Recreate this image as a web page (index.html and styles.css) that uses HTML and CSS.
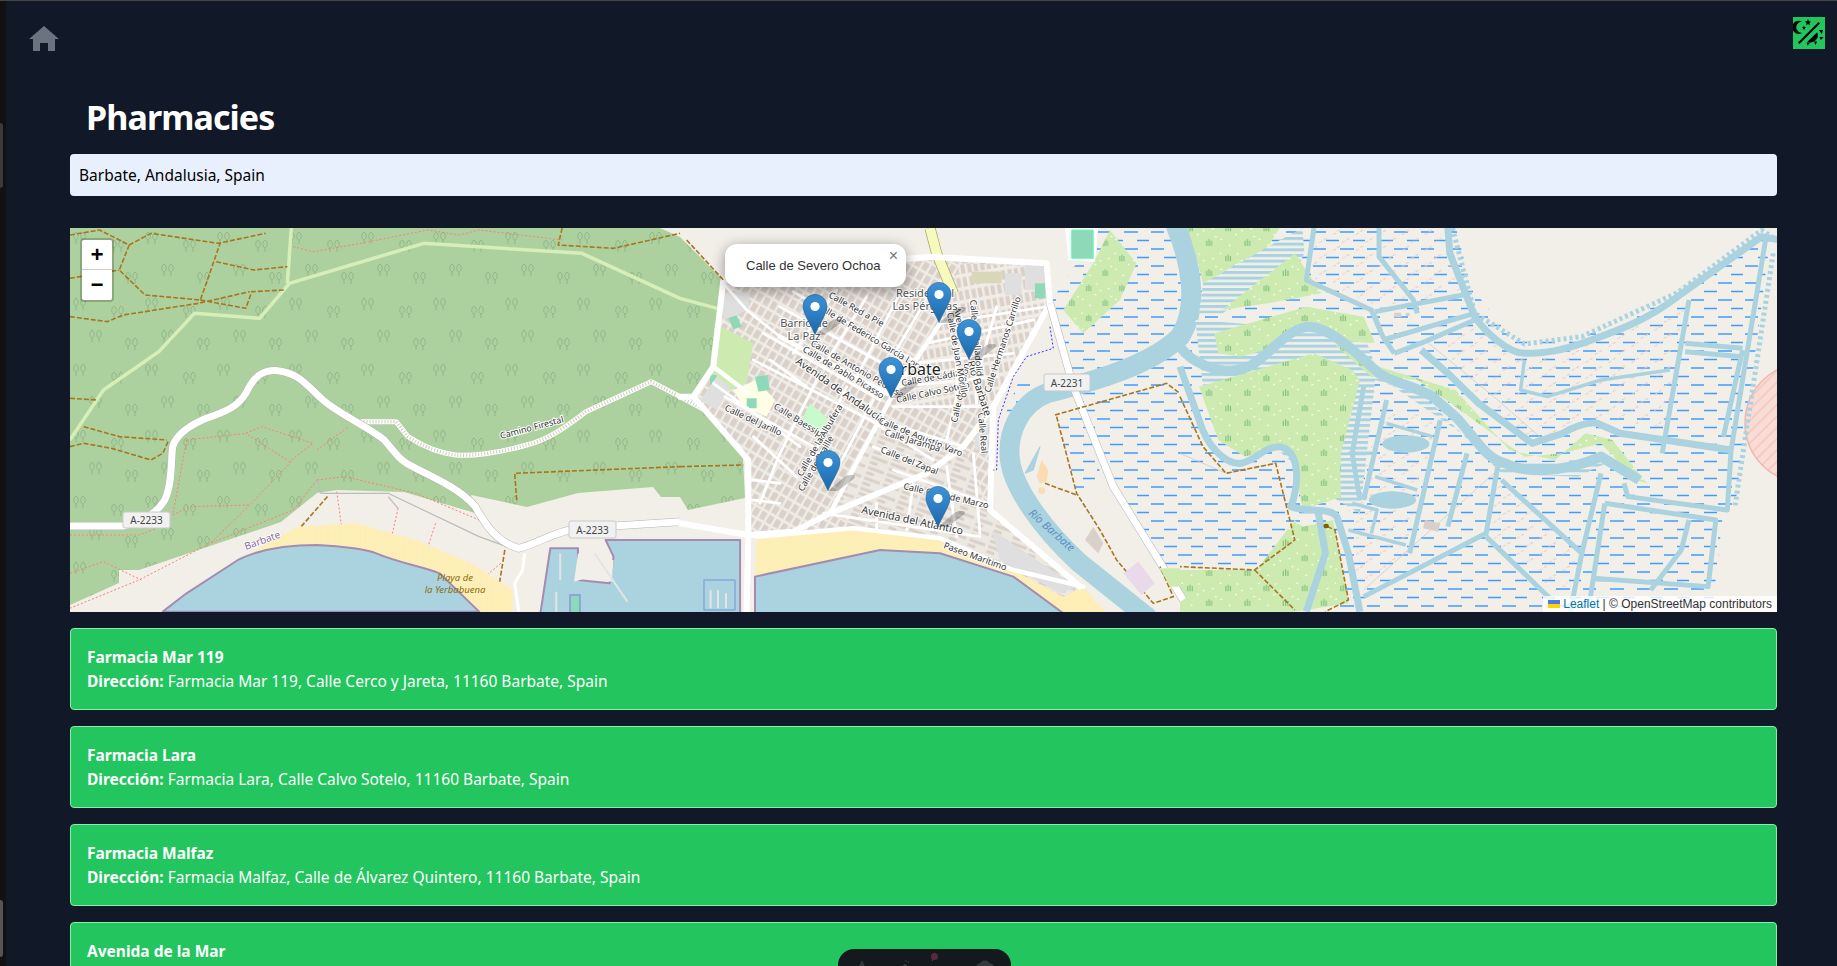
FILE: index.html

```html
<!DOCTYPE html>
<html lang="en">
<head>
  <meta charset="UTF-8" />
  <meta name="viewport" content="width=device-width, initial-scale=1.0" />
  <title>Pharmacies</title>
  <link rel="stylesheet" href="styles.css">
</head>
<body>
  <div class="strip"><span class="nub nub-top"></span><span class="nub nub-bottom"></span></div>

  <div class="page">
    <header class="topbar">
      <a class="home" href="#" aria-label="Home">
        <svg width="30" height="25" viewBox="0 0 30 25"><path d="M15 0 30 13H26V25H19V17H11V25H4V13H0Z"/></svg>
      </a>
      <button class="theme-btn" aria-label="Toggle theme">
        <svg width="32" height="32" viewBox="0 0 32 32">
          <path d="M9 4.5A6.6 6.6 0 1 0 9 16 5.6 5.6 0 0 1 9 4.5Z"/>
          <path d="M15 2 15.9 4.2 18 4.6 16.4 6 16.9 8.2 15 7 13.1 8.2 13.6 6 12 4.6 14.1 4.2Z"/>
          <path d="M11 8.6 11.6 10 13 10.4 11.9 11.3 12.2 12.7 11 12 9.8 12.7 10.1 11.3 9 10.4 10.4 10Z"/>
          <path d="M5 25.4 25.5 5 27 6.5 6.5 27Z"/>
          <path d="M24.2 15.2A7.4 7.4 0 0 1 14.4 24.8Z"/>
          <path d="M26 13H30L28.8 17ZM26.6 20H30.6L27.8 23ZM21 24.6H24L22.6 28ZM13.6 25.4H17.4L14.6 28.6Z"/>
        </svg>
      </button>
    </header>

    <main class="content">
      <h1 class="title">Pharmacies</h1>
      <input class="search" type="text" value="Barbate, Andalusia, Spain">

      <section class="map">
        <svg class="map-svg" width="1707" height="384" viewBox="0 0 1707 384">
          <defs>
            <pattern id="trees" width="72" height="66" patternUnits="userSpaceOnUse">
              <rect width="72" height="66" fill="#add19e"/>
              <g class="tree">
                <path d="M6 4C3 6 3 11 6 12 9 11 9 6 6 4ZM6 12V16M13 4C10 6 10 11 13 12 16 11 16 6 13 4ZM13 12V16"/>
                <path d="M44 12C41 14 41 19 44 20 47 19 47 14 44 12ZM44 20V24M51 12C48 14 48 19 51 20 54 19 54 14 51 12ZM51 20V24"/>
                <path d="M22 36C19 38 19 43 22 44 25 43 25 38 22 36ZM22 44V48M29 36C26 38 26 43 29 44 32 43 32 38 29 36ZM29 44V48"/>
                <path d="M58 44C55 46 55 51 58 52 61 51 61 46 58 44ZM58 52V56M65 44C62 46 62 51 65 52 68 51 68 46 65 44ZM65 52V56"/>
              </g>
            </pattern>
            <pattern id="wet" width="54" height="17" patternUnits="userSpaceOnUse">
              <path class="wet-line" d="M1 4H14M28 4H42M14 12.5H27M41 12.5H53"/>
            </pattern>
            <pattern id="salt" width="60" height="48" patternUnits="userSpaceOnUse">
              <path class="salt-line" d="M4 20 24 6M40 44 58 30"/>
            </pattern>
            <pattern id="marsh" width="100" height="90" patternUnits="userSpaceOnUse">
              <rect width="100" height="90" fill="#cdebb0"/>
              <path class="grass" d="M20 34V18M26 34V14M32 34V18M70 78V62M76 78V58M82 78V62"/>
              <g fill="#fff">
                <circle cx="6" cy="10" r="2.4"/><circle cx="50" cy="12" r="2.4"/><circle cx="86" cy="26" r="2.4"/>
                <circle cx="46" cy="44" r="2.4"/><circle cx="8" cy="58" r="2.4"/><circle cx="30" cy="76" r="2.4"/>
                <circle cx="62" cy="32" r="2.4"/><circle cx="94" cy="50" r="2.4"/>
              </g>
            </pattern>
            <pattern id="tidal" width="24" height="17" patternUnits="userSpaceOnUse">
              <rect width="24" height="17" fill="#f2efe9"/><rect width="24" height="9" fill="#aad3df"/>
            </pattern>
            <pattern id="blocks" width="48" height="33" patternUnits="userSpaceOnUse" patternTransform="rotate(30)">
              <rect width="48" height="33" fill="#f0ece6"/>
              <rect x="3" y="4" width="17" height="25" fill="#d9d0c9"/>
              <rect x="27" y="4" width="17" height="25" fill="#d9d0c9"/>
            </pattern>
            <pattern id="blocks-east" width="39" height="39" patternUnits="userSpaceOnUse" patternTransform="rotate(-10)">
              <rect width="39" height="39" fill="#f0ece6"/>
              <rect x="5" y="5" width="12" height="28" fill="#d9d0c9"/>
              <rect x="24" y="5" width="12" height="28" fill="#d9d0c9"/>
            </pattern>
            <pattern id="blocks-south" width="60" height="33" patternUnits="userSpaceOnUse" patternTransform="rotate(20)">
              <rect width="60" height="33" fill="#ece8e2"/>
              <rect x="4" y="5" width="50" height="9" fill="#d9d0c9"/>
              <rect x="4" y="21" width="24" height="9" fill="#d9d0c9"/>
            </pattern>
            <pattern id="hatch" width="8" height="8" patternUnits="userSpaceOnUse" patternTransform="rotate(-45)">
              <rect width="8" height="8" fill="#f8ddd6"/><path d="M0 4H8" stroke="#f4b8b0"/>
            </pattern>
            <pattern id="sand" width="6" height="6" patternUnits="userSpaceOnUse">
              <rect width="6" height="6" fill="#fff1ba"/><circle cx="1.5" cy="1.5" r=".5" fill="#d8bd74"/><circle cx="4.5" cy="4.5" r=".5" fill="#d8bd74"/>
            </pattern>
            <linearGradient id="pinfill" x1="0" y1="0" x2="0" y2="1">
              <stop offset="0" stop-color="#3d93d8"/><stop offset="1" stop-color="#1c68ab"/>
            </linearGradient>
            <g id="pin">
              <path class="pin-shadow" d="M12.5 41 30 26C37 24 42 25 38 29L22 41Z"/>
              <path class="pin-body" d="M12.5.5C5.9.5.5 5.9.5 12.5.5 19 8 30 12.5 40.5 17 30 24.5 19 24.5 12.5 24.5 5.9 19.1.5 12.5.5Z"/>
              <circle cx="12.5" cy="12.5" r="4.6" fill="#fff"/>
            </g>
          </defs>

          <rect width="1707" height="384" fill="#f2efe9"/>

          <!-- marshland -->
          <path fill="url(#wet)" d="M1003 159 1043 149 1110 109 1125 65 1107 0H1386L1401 59 1443 112 1512 109 1607 69 1692 5 1700 12 1665 279 1653 285 1642 384H1125L1055 276Z"/>
          <path fill="url(#wet)" d="M1030 0H1107L1125 65 1110 109 1043 149 1003 159 980 75ZM987 189 1013 182 1033 255 1007 265ZM934 190 960 165 990 150 950 150Z"/>
          <ellipse cx="1735" cy="195" rx="60" ry="60" fill="url(#hatch)" stroke="#f4b4b0" stroke-width="1.5"/>

          <path fill="url(#trees)" d="M0 0H590L610 9 653 52 643 139 625 172 673 230 675 270 618 282 610 269H591L583 259 508 265 457 279 401 267 405 285 334 264 267 262 247 265 211 294 69 342H49V355L0 377Z"/>

          <g class="z" transform="translate(610,-8) scale(.3333)">
            <path fill="#cdebb0" d="M105 310 220 370 190 540 130 560 40 530 100 440Z"/>
            <path fill="url(#marsh)" d="M1290 30 1370 130 1320 240 1210 340 1150 270 1240 130Z"/>
            <path class="river" d="M1490 24C1530 120 1560 260 1500 350 1430 420 1300 470 1100 520 1020 550 980 640 990 720 1000 800 1080 920 1200 1030L1400 1190"/>
          </g>

          <g class="z" transform="translate(1110,-8) scale(.3827,.3333)">
            <path fill="url(#salt)" d="M360 24H690L750 220 520 260 340 170ZM690 380 770 320 900 410 1050 370 1320 240 1270 620 1080 600 920 660 780 540ZM540 560 680 600 600 1000 450 1100 440 860ZM830 780 1040 1000 1000 1130 800 950Z"/>
            <path fill="url(#tidal)" d="M60 190 230 80 320 24 325 100 300 160 110 280 50 280Z"/>
            <path fill="url(#tidal)" d="M40 300 480 340 520 470 850 730 1130 720 1040 770 840 760 640 530 510 480 470 880 410 840 60 500Z"/>
            <path fill="url(#marsh)" d="M20 24H260L230 80 60 190 40 100ZM110 270 300 100 370 220 230 250ZM90 340 330 260 480 290 510 370 400 360 360 310 250 380 160 410 100 400ZM50 500 350 400 450 450 470 480 420 700 420 830 320 870 300 730 260 680 170 710 100 660ZM400 370 520 440 720 510 860 690 980 720 1060 640 1130 660 1220 790 1190 780 1100 670 1000 700 900 710 720 560 620 480 500 470ZM0 1050H200L300 900 320 920 400 900 440 1150 300 1175H0Z"/>
            <ellipse cx="590" cy="672" rx="62" ry="26" fill="#aad3df"/>
            <ellipse cx="555" cy="840" rx="62" ry="26" fill="#aad3df"/>
            <path class="ch c8" d="M0 380C30 430 100 460 150 450 220 440 270 320 340 320 400 325 470 410 520 460 560 490 620 500 660 530L720 590C770 650 800 720 850 730 900 760 1000 760 1100 710L1200 780"/>
            <path class="ch c6" d="M700 24 705 100 770 290C800 340 860 400 900 400 960 400 1000 390 1050 370 1150 330 1220 300 1300 230L1520 50 1568 60"/>
            <path class="ch c6" d="M630 390 700 460 780 550 920 670 1000 640C1030 620 1060 605 1090 610L1150 640 1440 690"/>
            <path class="ch c6" d="M0 440 50 600C70 680 120 735 160 730 200 720 220 680 260 680 310 690 315 780 290 860 340 880 390 860 410 890L440 1000 470 1175"/>
            <path class="ch c6" d="M360 870 380 1000 330 1175"/>
            <path class="ch c4" d="M350 24 330 180 500 270 530 350 560 400M520 24V110L610 240 620 280M510 275 740 225M530 360 770 280M560 400 640 365 770 300"/>
            <path class="ch c4" d="M480 500 450 700 470 840M540 540 480 840M680 600 600 1000M750 700 700 920M830 740 800 940 480 1130M800 950 980 1150"/>
            <path class="ch c4" d="M840 780 1050 1000 1100 760M1050 1000 1020 1175M1110 850 1070 1150M1110 850 1400 900 1380 1100 1080 1075M1330 900 1310 990 1230 1110"/>
            <path class="ch c4" d="M1160 790 1170 830 1430 870 1440 690 1530 60M1470 390 1420 650M1330 240 1260 700M1320 370 1470 385M1320 395 1470 410"/>
            <path class="ch c3" d="M900 420 890 510 960 530 1100 480 1280 450M440 700H500M510 770 620 810M540 610 660 650M440 930 590 975M450 850 515 870 500 940"/>
            <path class="ch-edge" d="M712 24 770 280 900 372 1050 350 1300 218 1520 30 1558 60M1550 100 1450 860"/>
            <path class="ch-thin" d="M340 180 510 270 540 370M0 700 120 760 250 730M650 370 830 540 950 660M840 740 480 1110"/>
            <path class="track" d="M0 530 60 680 120 760 250 730 300 960 195 1050 0 1040M195 1050 300 1170M385 920 405 930 440 1140 380 1175"/>
            <circle cx="382" cy="918" r="7" fill="#8a5a00"/>
            <path fill="#d9d0c9" d="M640 900 680 910 675 935 635 925Z"/>
            <path fill="#d9d0c9" d="M560 278H578V292H560ZM590 278H600V288H590Z"/>
          </g>

          <!-- left half, forest tracks and the A-2233 -->
          <g class="z" transform="translate(-10,-8) scale(.3954,.3333)">
            <path class="green" d="M25 660 110 510 250 395 340 280 505 295 580 190 920 70 1320 100 1568 235 1740 290M585 24 575 190"/>
            <path class="track" d="M25 45 100 30 175 75 230 40 400 70 520 40M175 75 150 150 215 225 355 240 405 70M395 125 490 150 575 140M355 240 470 265 485 215 570 210M25 290 120 305 160 285 350 250 480 215M25 175 150 150M25 535 95 540M60 620 150 650 270 660M25 680 60 670 130 685 230 720 260 700 275 660M1155 840 1150 760 1568 740M1270 24 1260 75 1400 85 1568 40M610 920 680 825M1125 990 1110 1100 1095 1110"/>
            <path class="dots" d="M590 80 640 95 760 70 930 30 1010 45 1060 30 1270 60M320 660 470 640 510 620 640 670 580 725 470 640M650 690 730 620M585 725 480 855 380 970 200 1080 25 1165M320 660 285 885 330 860 480 855M25 945H200L245 925M25 1060 110 1025 205 1080M650 780 720 770 900 820 1060 900M650 780 590 870 380 970M700 815 715 945M855 865 835 970M950 910 925 1000M1115 1030 1050 1095"/>
            <path class="thin" d="M650 780 660 820 830 820 1060 950 1130 980M830 830 855 865"/>
            <path class="unpaved-case" d="M760 605H850L880 650C920 680 960 700 1000 705 1050 710 1120 695 1180 675 1230 660 1270 630 1330 575L1495 485 1568 530 1740 640"/>
            <path class="unpaved" d="M760 605H850L880 650C920 680 960 700 1000 705 1050 710 1120 695 1180 675 1230 660 1270 630 1330 575L1495 485 1568 530 1740 640"/>

            <path fill="url(#sand)" d="M450 1020 600 920 750 910 900 960 1040 1030 1145 1110V1175H1060L960 1060 800 1000 650 975 540 985Z"/>
            <path class="bay" d="M260 1175 320 1120 450 1020C500 990 560 975 650 975 720 978 780 990 800 1000 860 1030 920 1040 960 1060L1060 1175Z"/>
            <path class="bay" d="M1240 985H1310V1080L1390 1090 1400 1010 1380 960H1720V1180H1215Z"/>
            <path fill="#f2efe9" d="M1310 1000 1400 1020 1395 1085 1330 1075 1300 1085Z"/>
            <path fill="#8ed9b8" stroke="#89a8d8" stroke-width="2" d="M1290 1125H1315V1180H1290Z"/>
            <path class="pier" d="M1265 1000V1080M1255 1115V1175M1352 1000 1435 1145"/>

            <path class="road-case" d="M25 918H160C210 905 245 880 265 840 285 790 280 720 285 680 295 640 330 615 370 595 420 575 450 560 470 520 490 470 510 450 550 452 600 458 620 490 660 535 700 580 780 620 820 660 850 700 860 725 900 745 960 780 1020 815 1050 860 1075 910 1100 965 1160 985 1210 970 1250 935 1310 925L1568 905"/>
            <path class="road" d="M25 918H160C210 905 245 880 265 840 285 790 280 720 285 680 295 640 330 615 370 595 420 575 450 560 470 520 490 470 510 450 550 452 600 458 620 490 660 535 700 580 780 620 820 660 850 700 860 725 900 745 960 780 1020 815 1050 860 1075 910 1100 965 1160 985 1210 970 1250 935 1310 925L1568 905"/>
            <path class="road-thin" d="M1175 1000 1170 1050 1150 1090 1160 1175"/>
          </g>

          <!-- town -->
          <g class="z" transform="translate(610,-8) scale(.3333)">
            <path fill="url(#sand)" d="M230 950 520 925 780 955 1000 1050 1210 1100 1280 1180H1150L1000 1070 780 1000 600 990 225 1070Z"/>
            <path class="bay" d="M225 1070 600 990 780 1000 1000 1070 1150 1180H225Z"/>
            <path fill="none" stroke="#89a8d8" stroke-width="1.5" d="M72 1080H165V1170H72Z"/>
            <path class="pier" d="M92 1110V1165M114 1110V1165M138 1120V1165"/>

            <path fill="url(#blocks)" d="M130 190 750 120 1100 140 1105 250 945 560 930 870 1210 1100 1150 1130 1000 1050 780 950 520 925 230 950 210 940 205 720 40 530 100 440Z"/>
            <path fill="url(#blocks-east)" d="M780 310 840 130 1100 140 1105 250 945 560 640 560Z"/>
            <path fill="url(#blocks-south)" d="M600 600 850 680 930 870 1210 1100 1150 1130 1000 1050 780 950 520 925 450 880Z"/>
            <path fill="#cdebb0" d="M105 310 220 370 200 490 130 520 90 440Z"/>
            <path fill="#ffffe5" d="M160 510 230 480 285 540 260 590 190 560Z"/>
            <path fill="#8ed9b8" d="M225 470 262 465 270 510 235 515ZM200 535H230V565H200ZM90 465H110V495H90ZM145 295 170 285 185 320 160 328Z"/>
            <path fill="#c8facc" d="M390 550 450 600 420 650 360 610Z"/>
            <path fill="#e0dfdf" d="M975 160H1025V225H975ZM1035 130H1100V210H1035ZM130 220 210 215 205 270 130 300ZM60 540 110 470 150 500 110 570ZM885 590H925V690H885ZM935 930 1190 1100 1140 1120 960 1020Z"/>
            <path fill="#d8d8b8" d="M875 155H965V190H875Z"/>
            <path fill="#fff" d="M1155 24H1255L1245 125 1165 120Z"/>
            <path fill="#8ed9b8" stroke="#6fb" stroke-width="1" d="M1175 30H1240V115H1175Z"/>
            <path fill="#8ed9b8" d="M1065 190H1095V235H1065Z"/>
            <path class="hw" d="M750 24 770 100 820 220"/>
            <path class="hw-in" d="M750 24 770 100 820 220"/>

            <path class="st3" d="M470 210 340 400M560 230 430 440M660 220 530 470M750 220 620 440M420 460 300 700 240 850M500 500 380 750M580 540 460 770M340 215 700 420M300 260 660 460M250 340 600 540M220 420 570 600 760 720M135 530 400 680M100 490 360 680M220 650 350 770M215 780 300 790M215 840 300 850"/>
            <path class="st3" d="M780 310 1100 260M740 370 1060 300M700 430 1000 400M660 500 950 470M640 560 920 560M830 260V530L800 660M880 260 890 550M950 260 900 440M1010 260 950 440M600 600 850 680M580 680 760 750M640 750 920 850M590 850V930M430 880 900 950M700 790 680 930M800 740 830 950M880 700 900 940M270 420 380 500M130 190 200 270 300 350"/>
            <path class="st5" d="M780 310 635 530 450 880M300 350 640 530M230 950 520 925 780 955 1000 1050 1210 1100M100 440 205 520"/>
            <path class="st7" d="M205 945V720L40 530 100 440 130 180 300 150 750 110 1100 130 1110 250 940 560 930 870 1200 1100M0 910 205 945 340 935 450 880 740 760 850 680 940 560M0 530 40 530M205 945 200 1175"/>
            <path class="road-case" d="M1110 250 1180 500 1300 800 1510 1140"/>
            <path class="road" d="M1110 250 1180 500 1300 800 1510 1140"/>
            <path class="boundary" d="M1110 320 1120 385 1040 410 1000 470 955 600 950 750H940"/>
            <path class="track" d="M20 60 130 180M0 740 190 735M1125 585 1460 490 1500 520M1130 590 1190 820 1260 930 1310 1020 1420 1150 1480 1130 1440 1040M1095 790 1190 825"/>
            <path fill="#fbdcb0" d="M1070 770 1085 720 1105 750 1100 785 1080 790Z"/>
            <circle cx="1085" cy="812" r="10" fill="#fbdcb0"/>
            <path class="thin-blue" d="M1035 760 1080 680 1060 750Z"/>
            <path fill="#ead9ea" d="M1330 1060 1375 1025 1425 1090 1385 1125Z"/>
            <path fill="#d9d0c9" d="M1215 960 1240 920 1270 970 1255 1000Z"/>
            <path fill="#cdebb0" d="M1440 1045H1500V1100H1470Z"/>
          </g>

          <text class="lbl" transform="translate(758 69) rotate(29)">Calle Red a Pie</text>
          <text class="lbl" transform="translate(746 80) rotate(31)">Calle de Federico García Lorca</text>
          <text class="lbl" transform="translate(740 117) rotate(30)">Calle de Antonio Pedrosa</text>
          <text class="lbl" transform="translate(732 123) rotate(31)">Calle de Pablo Picasso</text>
          <text class="lbl lbl-big" transform="translate(725 135) rotate(35)">Avenida de Andalucía</text>
          <text class="lbl" transform="translate(654 182) rotate(25)">Calle del Jarillo</text>
          <text class="lbl" transform="translate(703 180) rotate(32)">Calle Baessipo</text>
          <text class="lbl" transform="translate(732 249) rotate(-60)">Calle de la Albufera</text>
          <text class="lbl" transform="translate(733 264) rotate(-60)">Calle de Braille</text>
          <text class="lbl" transform="translate(832 158) rotate(-10)">Calle de Cádiz</text>
          <text class="lbl" transform="translate(827 175) rotate(-12)">Calle Calvo Sotelo</text>
          <text class="lbl" transform="translate(808 195) rotate(22)">Calle de Agustín Varo</text>
          <text class="lbl" transform="translate(814 207) rotate(17)">Calle Jarampa</text>
          <text class="lbl" transform="translate(810 224) rotate(22)">Calle del Zapal</text>
          <text class="lbl" transform="translate(833 261) rotate(13)">Calle Ocho de Marzo</text>
          <text class="lbl lbl-big" transform="translate(791 285) rotate(12)">Avenida del Atlántico</text>
          <text class="lbl" transform="translate(873 320) rotate(20)">Paseo Marítimo</text>
          <text class="lbl" transform="translate(908 185) rotate(85)">Calle Real</text>
          <text class="lbl" transform="translate(920 165) rotate(-72)">Calle Hermanos Carrillo</text>
          <text class="lbl lbl-big" transform="translate(897 134) rotate(72)">Río Barbate</text>
          <text class="lbl" transform="translate(887 195) rotate(-78)">Calle de Colón</text>
          <text class="lbl" transform="translate(877 85) rotate(80)">Calle de Juan Morillo</text>
          <text class="lbl" transform="translate(884 80) rotate(80)">Avenida</text>
          <text class="lbl" transform="translate(900 72) rotate(85)">Calle de Valladolid</text>
          <text class="lbl" transform="translate(431 211) rotate(-15)">Camino Firestal</text>

          <text class="place" x="841" y="147">Barbate</text>
          <text class="suburb" x="734" y="99">Barrio de</text>
          <text class="suburb" x="734" y="112">La Paz</text>
          <text class="suburb" x="855" y="69">Residencial</text>
          <text class="suburb" x="855" y="82">Las Pérgolas</text>
          <text class="water-lbl" transform="translate(958 286) rotate(42)">Río Barbate</text>
          <text class="park-lbl" transform="translate(176 322) rotate(-20)">Barbate</text>
          <text class="beach-lbl" x="385" y="353">Playa de</text>
          <text class="beach-lbl" x="385" y="365">la Yerbabuena</text>

          <g class="shield"><rect x="53" y="284" width="47" height="16" rx="2"/><text x="76.5" y="296">A-2233</text></g>
          <g class="shield"><rect x="499" y="293" width="47" height="17" rx="2"/><text x="522.5" y="305.5">A-2233</text></g>
          <g class="shield"><rect x="974" y="146" width="46" height="17" rx="2"/><text x="997" y="158.5">A-2231</text></g>

          <use href="#pin" x="732.5" y="66"/>
          <use href="#pin" x="856.5" y="54"/>
          <use href="#pin" x="886.5" y="91"/>
          <use href="#pin" x="808.5" y="129"/>
          <use href="#pin" x="745.5" y="222"/>
          <use href="#pin" x="855.5" y="258"/>
        </svg>

        <div class="zoom-ctl">
          <a class="zoom-btn zoom-in" href="#">+</a>
          <a class="zoom-btn" href="#">−</a>
        </div>

        <div class="popup">
          <a class="popup-close" href="#">×</a>
          <div class="popup-text">Calle de Severo Ochoa</div>
          <span class="popup-tip"></span>
        </div>

        <div class="attrib">
          <svg width="12" height="8" viewBox="0 0 12 8"><rect width="12" height="4" fill="#4C7BE1"/><rect y="4" width="12" height="4" fill="#FFD500"/></svg>
          <a href="#">Leaflet</a> | © OpenStreetMap contributors
        </div>
      </section>

      <div class="cards">
        <article class="card">
          <div class="card-name">Farmacia Mar 119</div>
          <div><b>Dirección:</b> Farmacia Mar 119, Calle Cerco y Jareta, 11160 Barbate, Spain</div>
        </article>
        <article class="card">
          <div class="card-name">Farmacia Lara</div>
          <div><b>Dirección:</b> Farmacia Lara, Calle Calvo Sotelo, 11160 Barbate, Spain</div>
        </article>
        <article class="card">
          <div class="card-name">Farmacia Malfaz</div>
          <div><b>Dirección:</b> Farmacia Malfaz, Calle de Álvarez Quintero, 11160 Barbate, Spain</div>
        </article>
        <article class="card">
          <div class="card-name">Avenida de la Mar</div>
        </article>
      </div>
    </main>
  </div>

  <div class="dock">
    <svg width="20" height="18" viewBox="0 0 20 18"><path d="M10 2 15 14H5Z"/></svg>
    <svg width="20" height="18" viewBox="0 0 20 18"><path d="M3 14 13 5 16 8 8 16ZM14 1V3M17 2 16 4"/></svg>
    <span class="dock-meter"><span class="dock-dot"></span></span>
    <span class="dock-sep"></span>
    <svg width="24" height="18" viewBox="0 0 24 18"><path d="M8 4 10 2H14L16 4 20 6V16H4V6Z"/></svg>
  </div>
</body>
</html>
```

FILE: styles.css

```css
* {
  box-sizing: border-box;
}
html, body {
  height: 966px;
  margin: 0;
  overflow: hidden;
}
body {
  display: flex;
  background: #111827;
  border-top: 1px solid #444;
  font-family: "Noto Sans", sans-serif;
  font-size: 15.5px;
  color: #fff;
}

/* window edge on the left */
.strip {
  width: 6px;
  flex: none;
  background: #111;
  display: flex;
  flex-direction: column;
  padding-top: 122px;
}
.nub {
  width: 3px;
  background: #3a3a3a;
  border-radius: 0 3px 3px 0;
}
.nub-top {
  height: 65px;
}
.nub-bottom {
  height: 57px;
  margin-top: 712px;
  background: #555;
}

.page {
  flex: 1;
  min-width: 0;
}
.topbar {
  height: 60px;
  display: flex;
  justify-content: space-between;
  align-items: flex-start;
  padding: 16px 12px 0 23px;
}
.home {
  margin-top: 9px;
  display: block;
}
.home svg {
  display: block;
  fill: #6b7280;
}
.theme-btn {
  width: 32px;
  height: 32px;
  padding: 0;
  border: 0;
  background: #22c55e;
  display: block;
}
.theme-btn svg {
  display: block;
  fill: #000;
}

.content {
  padding: 0 60px 0 64px;
}
.title {
  height: 93px;
  margin: 0;
  padding: 36px 0 0 16px;
  font-size: 34px;
  line-height: 40px;
  font-weight: 700;
  letter-spacing: -.9px;
}
.search {
  display: block;
  width: 100%;
  height: 42px;
  padding: 0 9px;
  border: 0;
  border-radius: 4px;
  background: #e8f0fe;
  color: #000;
  font: inherit;
}

.map {
  position: relative;
  height: 384px;
  margin-top: 32px;
  overflow: hidden;
  background: #f2efe9;
}
.map-svg {
  display: block;
}
.z path {
  vector-effect: non-scaling-stroke;
  stroke-linejoin: round;
}
.tree {
  fill: none;
  stroke: #8fb58a;
  stroke-width: 1;
}
.wet-line {
  stroke: #3d9cff;
  stroke-width: 1.3;
}
.salt-line {
  stroke: #eccbc4;
  stroke-width: 3;
  stroke-dasharray: 9 5;
}
.grass {
  stroke: #7fbf7f;
  stroke-width: 3;
}
.river {
  fill: none;
  stroke: #aad3df;
  stroke-width: 20;
  stroke-linecap: round;
}
.ch {
  fill: none;
  stroke: #aad3df;
}
.c8 { stroke-width: 10; }
.c6 { stroke-width: 7; }
.c4 { stroke-width: 5; }
.c3 { stroke-width: 3.5; }
.ch-edge {
  fill: none;
  stroke: #aad3df;
  stroke-width: 5;
  stroke-dasharray: 3 3;
}
.ch-thin {
  fill: none;
  stroke: #c9c9c9;
  stroke-width: .7;
}
.green {
  fill: none;
  stroke: #d6eeb8;
  stroke-width: 3.5;
}
.track {
  fill: none;
  stroke: #a9751e;
  stroke-width: 1.6;
  stroke-dasharray: 5 2;
}
.dots {
  fill: none;
  stroke: #fa8072;
  stroke-width: 1;
  stroke-dasharray: 2 2;
}
.thin {
  fill: none;
  stroke: #bbb;
  stroke-width: 1.2;
}
.thin-blue {
  fill: #aad3df;
  stroke: #aad3df;
  stroke-width: 1;
}
.unpaved-case {
  fill: none;
  stroke: #fff;
  stroke-width: 5;
}
.unpaved {
  fill: none;
  stroke: #cfc9c2;
  stroke-width: 3.5;
  stroke-dasharray: 1 2;
}
.bay {
  fill: #aad3df;
  stroke: #a58bb0;
  stroke-width: 2;
}
.pier {
  fill: none;
  stroke: #e4e4e4;
  stroke-width: 2;
}
.road-case {
  fill: none;
  stroke: #b5b5b5;
  stroke-width: 8;
}
.road {
  fill: none;
  stroke: #fff;
  stroke-width: 7;
}
.road-thin {
  fill: none;
  stroke: #fff;
  stroke-width: 3;
}
.st3, .st5, .st7 {
  fill: none;
  stroke: #fff;
  stroke-linecap: round;
}
.st3 { stroke-width: 2.8; }
.st5 { stroke-width: 4.5; }
.st7 { stroke-width: 6; }
.hw {
  fill: none;
  stroke: #a8a860;
  stroke-width: 11;
}
.hw-in {
  fill: none;
  stroke: #f7fabf;
  stroke-width: 9.5;
}
.boundary {
  fill: none;
  stroke: #3333ff;
  stroke-width: 1;
  stroke-dasharray: 2 2;
}
.lbl {
  font-family: "Noto Sans", sans-serif;
  font-size: 9px;
  fill: #333;
  stroke: #fff;
  stroke-width: 2px;
  paint-order: stroke;
}
.lbl-big {
  font-size: 10.5px;
}
.place {
  font-family: "Noto Sans", sans-serif;
  font-size: 16px;
  text-anchor: middle;
  fill: #222;
  stroke: #fff;
  stroke-width: 2px;
  paint-order: stroke;
}
.suburb {
  font-family: "Noto Sans", sans-serif;
  font-size: 11px;
  text-anchor: middle;
  fill: #555;
  stroke: #fff;
  stroke-width: 2px;
  paint-order: stroke;
}
.water-lbl {
  font-family: "Noto Sans", sans-serif;
  font-style: italic;
  font-size: 11px;
  fill: #5a8fc8;
}
.park-lbl {
  font-family: "Noto Sans", sans-serif;
  font-size: 10px;
  fill: #8a6a9a;
  stroke: #fff;
  stroke-width: 1.5px;
  paint-order: stroke;
}
.beach-lbl {
  font-family: "Noto Sans", sans-serif;
  font-style: italic;
  font-size: 9.5px;
  text-anchor: middle;
  fill: #8a6d0e;
}
.shield rect {
  fill: #f1f1f1;
  stroke: #c9c9c9;
}
.shield text {
  font-family: "Noto Sans", sans-serif;
  font-size: 10px;
  text-anchor: middle;
  fill: #444;
}
.pin-body {
  fill: url(#pinfill);
  stroke: #1d5f96;
  stroke-width: .6;
}
.pin-shadow {
  fill: #000;
  opacity: .22;
}

.zoom-ctl {
  position: absolute;
  top: 10px;
  left: 10px;
  width: 34px;
  border: 2px solid rgba(0, 0, 0, .2);
  border-radius: 4px;
  background-clip: padding-box;
}
.zoom-btn {
  display: block;
  height: 30px;
  overflow: hidden;
  background: #fff;
  color: #000;
  text-align: center;
  text-decoration: none;
  font: bold 22px/34px "Liberation Mono", monospace;
  border-radius: 0 0 2px 2px;
}
.zoom-in {
  border-bottom: 1px solid #ccc;
  border-radius: 2px 2px 0 0;
}

.popup {
  position: absolute;
  top: 16px;
  left: 655px;
  width: 181px;
  height: 43px;
  background: #fff;
  border-radius: 12px;
  color: #333;
  box-shadow: 0 3px 14px rgba(0, 0, 0, .4);
  font: 13px/18px "Liberation Sans", sans-serif;
}
.popup-text {
  position: relative;
  padding: 13px 0 0 21px;
}
.popup-close {
  position: absolute;
  top: 3px;
  right: 8px;
  color: #757575;
  text-decoration: none;
  font: 16px/18px "Liberation Sans", sans-serif;
}
.popup-tip {
  position: absolute;
  left: 81px;
  bottom: -9px;
  width: 18px;
  height: 18px;
  background: #fff;
  transform: rotate(45deg);
  z-index: -1;
}

.attrib {
  position: absolute;
  right: 0;
  bottom: 0;
  height: 16px;
  padding: 0 5px;
  background: rgba(255, 255, 255, .8);
  color: #333;
  font: 12px/16px "Liberation Sans", sans-serif;
}
.attrib a {
  color: #0078a8;
  text-decoration: none;
}

.cards {
  margin-top: 16px;
  display: flex;
  flex-direction: column;
  gap: 16px;
}
.card {
  height: 82px;
  flex: none;
  padding: 16px;
  background: #22c55e;
  border: 1px solid #86efac;
  border-radius: 4px;
  line-height: 24px;
}
.card-name {
  font-weight: 700;
}

.dock {
  position: fixed;
  left: 838px;
  top: 949px;
  width: 173px;
  height: 17px;
  padding: 10px 14px 0;
  display: flex;
  align-items: flex-start;
  gap: 20px;
  background: #14191e;
  border-radius: 16px 16px 0 0;
  overflow: hidden;
}
.dock svg {
  flex: none;
  fill: #34393d;
  stroke: #34393d;
}
.dock-meter {
  position: relative;
  width: 18px;
  height: 3px;
  margin-top: -1px;
  background: #44494e;
}
.dock-dot {
  position: absolute;
  top: -5px;
  right: -5px;
  width: 7px;
  height: 7px;
  border-radius: 50%;
  background: #5a2a3a;
}
.dock-sep {
  width: 1px;
  height: 17px;
  margin-top: -10px;
  background: #2e3338;
}
```
